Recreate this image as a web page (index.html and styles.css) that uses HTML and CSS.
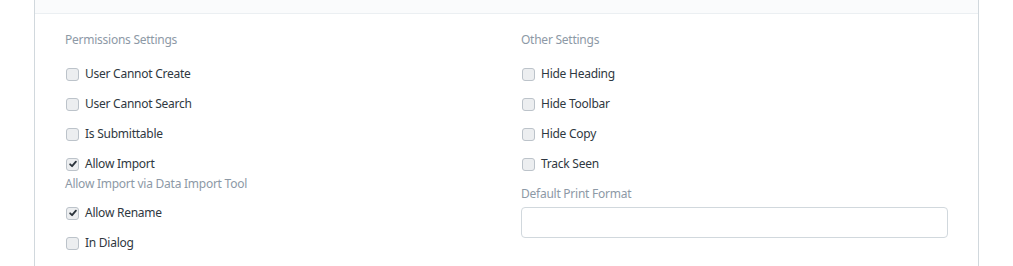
FILE: index.html
```html
<!DOCTYPE html>
<html lang="en">
<head>
    <meta charset="UTF-8">
    <title>DocType Settings</title>
    <link rel="stylesheet" href="styles.css">
</head>
<body>

<div class="page">
    <div class="panel">
        <div class="panel-head"></div>

        <div class="panel-body">
            <!-- Permissions -->
            <div class="column">
                <div class="section-title">Permissions Settings</div>

                <div class="field">
                    <span class="check"></span>
                    <span class="field-label">User Cannot Create</span>
                </div>
                <div class="field">
                    <span class="check"></span>
                    <span class="field-label">User Cannot Search</span>
                </div>
                <div class="field">
                    <span class="check"></span>
                    <span class="field-label">Is Submittable</span>
                </div>
                <div class="field">
                    <span class="check checked">
                        <svg viewBox="0 0 12 12"><path d="M2.6 6.4 L4.9 8.6 L9.5 3.2" /></svg>
                    </span>
                    <span class="field-label">Allow Import</span>
                </div>
                <div class="help-text">Allow Import via Data Import Tool</div>
                <div class="field after-help">
                    <span class="check checked">
                        <svg viewBox="0 0 12 12"><path d="M2.6 6.4 L4.9 8.6 L9.5 3.2" /></svg>
                    </span>
                    <span class="field-label">Allow Rename</span>
                </div>
                <div class="field">
                    <span class="check"></span>
                    <span class="field-label">In Dialog</span>
                </div>
            </div>

            <!-- Other -->
            <div class="column column-right">
                <div class="section-title">Other Settings</div>

                <div class="field">
                    <span class="check"></span>
                    <span class="field-label">Hide Heading</span>
                </div>
                <div class="field">
                    <span class="check"></span>
                    <span class="field-label">Hide Toolbar</span>
                </div>
                <div class="field">
                    <span class="check"></span>
                    <span class="field-label">Hide Copy</span>
                </div>
                <div class="field">
                    <span class="check"></span>
                    <span class="field-label">Track Seen</span>
                </div>

                <div class="input-label">Default Print Format</div>
                <input type="text" class="text-input">
            </div>
        </div>
    </div>
</div>

</body>
</html>
```

FILE: styles.css
```css
:root {
    --border: #d1d8dd;
    --border-light: #ebeff2;
    --head-bg: #fafbfc;
    --text-main: #36414c;
    --text-muted: #8d99a6;
}

* {
    box-sizing: border-box;
    margin: 0;
    padding: 0;
}

body {
    font-family: "Noto Sans", "Open Sans", sans-serif;
    font-size: 12px;
    letter-spacing: -0.25px;
    color: var(--text-main);
    background: #fff;
}

.page {
    padding: 0 34px;
    width: 1013px;
}

.panel {
    width: 945px;
    height: 266px;
    border-left: 1px solid var(--border);
    border-right: 1px solid var(--border);
}

.panel-head {
    height: 14px;
    background: var(--head-bg);
    border-bottom: 1px solid var(--border-light);
}

.panel-body {
    display: grid;
    grid-template-columns: 456px 456px;
    padding: 17px 15px 0;
}

.column {
    display: flex;
    flex-direction: column;
    padding: 0 15px;
}

.column-right {
    padding-right: 14px;
}

.section-title {
    color: var(--text-muted);
    line-height: 18px;
    margin-bottom: 10px;
}

/* Checkbox rows */
.field {
    display: flex;
    align-items: center;
    gap: 6px;
    height: 30px;
    padding-left: 1px;
}

.field.after-help {
    margin-top: 5px;
}

.check {
    width: 13px;
    height: 13px;
    border: 1px solid #bcc3ca;
    border-radius: 3px;
    background: #eceef0;
    flex-shrink: 0;
    display: flex;
    align-items: center;
    justify-content: center;
}

.check svg {
    width: 10px;
    height: 10px;
    fill: none;
    stroke: #2b333b;
    stroke-width: 2.2;
    stroke-linecap: round;
    stroke-linejoin: round;
}

.field-label {
    line-height: 18px;
    color: #2f3841;
}

.help-text {
    color: var(--text-muted);
    line-height: 18px;
    margin-top: -4px;
}

/* Print format */
.input-label {
    color: var(--text-muted);
    line-height: 18px;
    margin-top: 6px;
}

.text-input {
    margin-top: 4px;
    height: 31px;
    width: 100%;
    border: 1px solid var(--border);
    border-radius: 4px;
    background: #fff;
    outline: none;
}
```
